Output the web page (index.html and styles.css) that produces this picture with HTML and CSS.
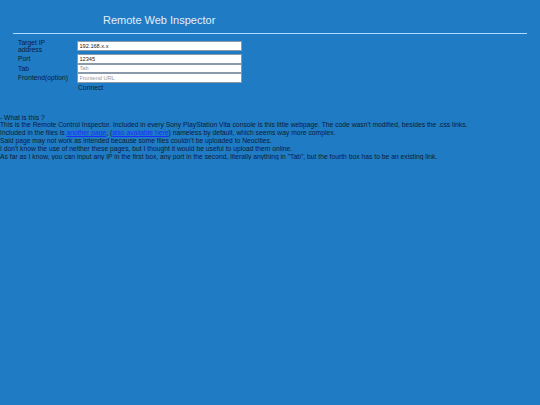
FILE: index.html
```html
<!DOCTYPE html>
<html>
<head>
<meta charset="utf-8">
<title>Remote Web Inspector</title>
<link rel="stylesheet" href="styles.css">
</head>
<body>
<div class="header">
  <h1 class="title">Remote Web Inspector</h1>
</div>
<div class="rule"></div>
<div class="form">
  <label class="label">Target IP address</label>
  <input class="field" type="text" value="192.168.x.x">
  <label class="label">Port</label>
  <input class="field" type="text" value="12345">
  <label class="label">Tab</label>
  <input class="field" type="text" placeholder="Tab">
  <label class="label">Frontend(option)</label>
  <input class="field" type="text" placeholder="Frontend URL">
  <span></span>
  <span class="connect">Connect</span>
</div>
<div class="about">
  <p>- What is this ?</p>
  <p>This is the Remote Control Inspector. Included in every Sony PlayStation Vita console is this little webpage. The code wasn't modified, besides the .css links.</p>
  <p>Included in the files is <a href="#">another page</a>, (<a href="#">also available here</a>) nameless by default, which seems way more complex.</p>
  <p>Said page may not work as intended because some files couldn't be uploaded to Neocities.</p>
  <p>I don't know the use of neither these pages, but I thought it would be useful to upload them online.</p>
  <p>As far as I know, you can input any IP in the first box, any port in the second, literally anything in "Tab", but the fourth box has to be an existing link.</p>
</div>
</body>
</html>
```

FILE: styles.css
```css
html, body {
  margin: 0;
  padding: 0;
  background: #1f7bc4;
}
body {
  font-family: "Liberation Sans", Arial, sans-serif;
  font-size: 6.75px;
  color: #0c1c36;
}
.header {
  padding: 14px 0 0 103px;
}
.title {
  margin: 0;
  font-size: 11px;
  font-weight: normal;
  color: #e4eefa;
  line-height: 13px;
}
.rule {
  margin: 6px 13px 0 13px;
  height: 1px;
  background: #a9dcff;
}
.form {
  display: grid;
  grid-template-columns: 52px 165px;
  column-gap: 7px;
  align-items: center;
  margin: 4px 0 0 18px;
}
.label {
  line-height: 7.6px;
  padding: 0.5px 0;
}
.field {
  box-sizing: border-box;
  width: 165px;
  height: 9.5px;
  margin: 0;
  padding: 0 1.5px;
  border: 0.5px solid #8a9aaa;
  background: #ffffff;
  font-family: "Liberation Sans", Arial, sans-serif;
  font-size: 5.6px;
  color: #222;
  display: block;
}
.field::placeholder {
  color: #9a9a9a;
}
.connect {
  display: block;
  line-height: 9px;
  padding-left: 1px;
  color: #0c1c36;
}
.about {
  margin-top: 22px;
}
.about p {
  margin: 0;
  line-height: 7.8px;
}
.about a {
  color: #1a2cff;
  text-decoration: underline;
}
```
